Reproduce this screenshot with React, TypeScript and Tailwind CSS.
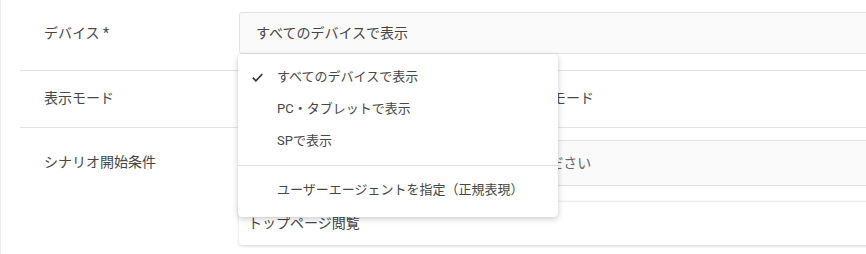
import React from "react";

export default function App() {
  const font = { fontFamily: 'Roboto, "Noto Sans CJK JP", sans-serif' };
  return (
    <div className="relative h-[254px] w-[866px] overflow-hidden bg-white text-[14px] text-[#474747]" style={font}>
      <div className="flex h-full w-[900px] flex-col border-l border-[#ececec] pl-[19px]">
        {/* Row 1 */}
        <div className="flex h-[71px] border-b border-[#e3e3e3]">
          <div className="w-[219px] shrink-0 pl-[24px] pt-[23px] leading-[20px]">デバイス *</div>
          <div className="flex-1 pt-[12px]">
            <div className="flex h-[42px] items-center rounded-[3px] border border-[#e2e2e2] bg-[#fafafa] pl-[16px]">
              すべてのデバイスで表示
            </div>
          </div>
        </div>
        {/* Row 2 */}
        <div className="flex h-[57px] border-b border-[#e3e3e3]">
          <div className="w-[219px] shrink-0 pl-[24px] pt-[17px] leading-[20px]">表示モード</div>
          <div className="flex flex-1 items-start pt-[17px] leading-[20px]">
            <span className="ml-[229px]">ポップアップモード</span>
          </div>
        </div>
        {/* Row 3 */}
        <div className="flex flex-1">
          <div className="w-[219px] shrink-0 pl-[24px] pt-[24px] leading-[20px]">シナリオ開始条件</div>
          <div className="flex flex-1 flex-col pt-[12px]">
            <div className="flex h-[46px] items-center rounded-[3px] border border-[#e2e2e2] bg-[#fafafa] pl-[16px] text-[#666]">
              <span className="ml-[182px]">条件を選択してください</span>
            </div>
            <div className="mt-[15px] flex h-[44px] items-center rounded-[3px] border-t border-[#ececec] bg-white pl-[9px] shadow-[0_1px_3px_rgba(0,0,0,0.18)]">
              トップページ閲覧
            </div>
          </div>
        </div>
      </div>

      {/* Dropdown menu */}
      <div className="absolute left-[238px] top-[54px] w-[320px] rounded-[4px] bg-white pb-[11px] pt-[7px] text-[13px] shadow-[0_2px_6px_rgba(0,0,0,0.2),0_0_1px_rgba(0,0,0,0.12)]">
        <div className="flex h-[32px] items-center">
          <svg className="ml-[14px] mr-[14px]" width="11" height="9" viewBox="0 0 11 9" fill="none">
            <path d="M0.8 4.6 L3.9 7.8 L10.3 1" stroke="#333" strokeWidth="1.6" />
          </svg>
          <span>すべてのデバイスで表示</span>
        </div>
        <div className="flex h-[32px] items-center pl-[39px]">PC・タブレットで表示</div>
        <div className="flex h-[32px] items-center pl-[39px]">SPで表示</div>
        <div className="my-[8px] border-t border-[#e0e0e0]" />
        <div className="flex h-[32px] items-center pl-[39px]">ユーザーエージェントを指定（正規表現）</div>
      </div>
    </div>
  );
}
